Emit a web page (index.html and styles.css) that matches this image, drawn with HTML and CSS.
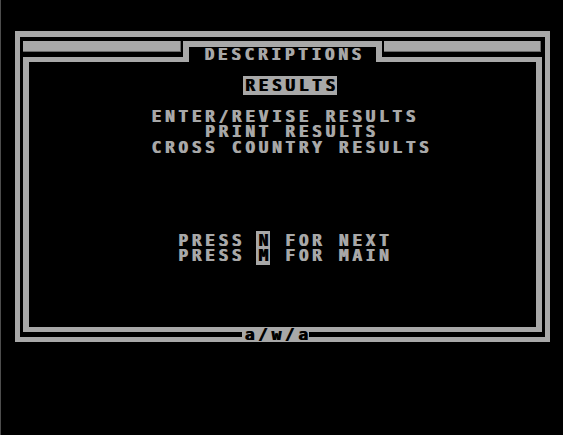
FILE: index.html
```html
<!DOCTYPE html>
<html lang="en">
    <head>
        <meta charset="UTF-8" />
        <title>Descriptions</title>
        <link rel="stylesheet" href="styles.css">
    </head>
    <body>
        <div id="frame">
            <div id="header">
                <div class="side left"><div class="bar"></div></div>
                <div id="tab">DESCRIPTIONS</div>
                <div class="side right"><div class="bar"></div></div>
            </div>
            <div id="panel">
<pre id="text">                <span class="inv">RESULTS</span>

         ENTER/REVISE RESULTS
             PRINT RESULTS
         CROSS COUNTRY RESULTS





           PRESS <span class="inv">N</span> FOR NEXT
           PRESS <span class="inv">M</span> FOR MAIN</pre>
            </div>
            <span id="footer">a/w/a</span>
        </div>
    </body>
</html>
```

FILE: styles.css
```css
body {
    margin: 0;
    height: 435px;
    overflow: hidden;
    background: #000;
    box-shadow: inset 1px 0 #4d4d4d;
    font: bold 16px "DejaVu Sans Mono", monospace;
    color: #a8a8a8;
}
/* 40 columns of 13.375px, rows of 15.5px */
#frame {
    position: relative;
    width: 535px;
    box-sizing: border-box;
    margin: 31px 0 0 15px;
    border: 5px solid #a8a8a8;
    border-top-width: 6px;
    padding: 4px 3px 5px;
}
#header {
    display: flex;
    height: 21px;
}
.side {
    flex: 1;
    border-bottom: 5px solid #a8a8a8;
}
.bar {
    height: 11px;
    background: #a8a8a8;
    box-shadow: inset -1px -1px #6b6b6b;
}
.left .bar { margin-right: 2px; }
.right .bar { margin: 0 1px 0 2px; }
#tab, #text, #footer {
    letter-spacing: 3.74px;
    text-shadow: 1px 0 currentColor;
}
#tab {
    width: 199px;
    box-sizing: border-box;
    border: 6px solid #a8a8a8;
    border-bottom: none;
    padding-left: 4px;
    text-align: center;
    line-height: 15px;
}
#panel {
    height: 265px;
    border: 6px solid #a8a8a8;
    border-top: none;
    border-bottom-width: 5px;
}
#text {
    margin: 0;
    padding: 15.5px 0 0 2px;
    font: inherit;
    line-height: 15.5px;
}
/* inverse video cell: block starts 2px before the glyph, ends 2px early */
.inv {
    color: #000;
    background: linear-gradient(to right, #a8a8a8 calc(100% - 2px), transparent 0);
    box-shadow: -2px 0 #a8a8a8;
}
#footer {
    position: absolute;
    left: 222.4px;
    bottom: -5px;
    width: 66.9px;
    height: 15.5px;
    box-sizing: border-box;
    padding-left: 2px;
    background: #a8a8a8;
    color: #000;
    line-height: 15.5px;
}
```
